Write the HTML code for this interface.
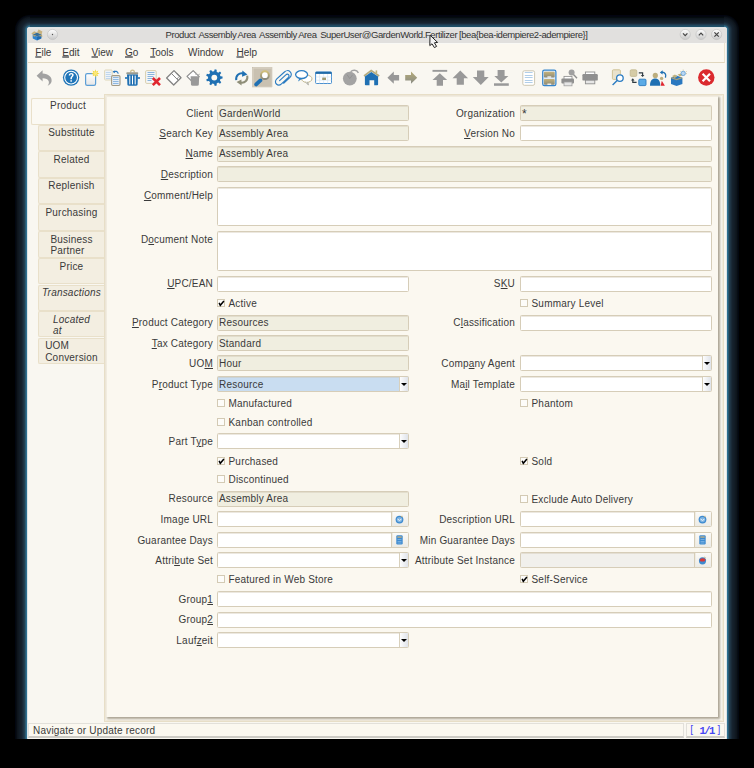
<!DOCTYPE html>
<html><head><meta charset="utf-8"><style>
*{box-sizing:border-box;margin:0;padding:0}
html,body{width:754px;height:768px;overflow:hidden;background:#000}
body{position:relative;font-family:"Liberation Sans", sans-serif;color:#3a3a3a}
#clip{position:absolute;left:0;top:0;width:754px;height:739px;overflow:hidden}
#win{position:absolute;left:27px;top:27px;width:700px;height:712px;background:#f9f7f1;border-radius:3px 3px 0 0;
 border-left:1px solid #dde3e6;border-right:1px solid #dfe4e6}
#title{position:absolute;left:27px;top:27px;width:700px;height:16px;background:linear-gradient(#dfe3e5 0,#dfe3e5 1px,#e6e5e3 1px,#e6e5e3 2px,#e1e0de 2px);border-radius:3px 3px 0 0}
#menu{position:absolute;left:28px;top:43px;width:697px;height:20px;background:linear-gradient(#f9f9f5 0,#f9f9f5 1px,#fbf8f0 1px);border-bottom:1px solid #e0d6bd;border-right:1px solid #ebe3cf}
.mi{position:absolute;top:47px;font-size:10px;color:#3a3a3a;white-space:nowrap}
.lb{position:absolute;font-size:10px;letter-spacing:0.2px;white-space:nowrap;line-height:12px;color:#3a3a3a}
.lt{position:absolute;font-size:10px;letter-spacing:0.2px;white-space:nowrap;line-height:12px;color:#3a3a3a}
.f{position:absolute;border:1px solid #d6cdb8;border-radius:1.5px;overflow:hidden;box-shadow:inset 0 1px 0 rgba(200,190,165,0.35)}
.ro{background:#f0eee0}
.w{background:#fff}
.sel{background:#c9ddf1}
.gray{background:#f1f0ec}
.ft{position:absolute;left:1px;top:1.5px;font-size:10px;letter-spacing:0.2px;line-height:12px;color:#3a3a3a;white-space:nowrap}
.cb{position:absolute;right:0;top:0;width:9.5px;height:100%;border-left:1px solid #d8d0bc;background:linear-gradient(90deg,#fdfdfd,#dfe3ea)}
.tri{position:absolute;left:1.5px;top:5.5px;width:0;height:0;border-left:3px solid transparent;border-right:3px solid transparent;border-top:3.5px solid #000}
.bb{position:absolute;right:0;top:0;width:17.5px;height:100%;border-left:1px solid #d6cdb8;box-shadow:inset 1px 0 0 #f0ece2;background:linear-gradient(#fbfaf7,#ecebe6);display:flex;align-items:center;justify-content:center}
.ck{position:absolute;width:8px;height:8px;border:1px solid #d3cab4;background:#fdfcf9}
.ck svg{position:absolute;left:-1px;top:-1px}
.tab{position:absolute;left:38px;width:66px;background:#f3eee1;border:1px solid #e9e0ca;border-right:none;border-radius:2px 0 0 2px;font-size:10px;letter-spacing:0.2px;line-height:11.5px;text-align:center;padding-top:1.5px;color:#3a3a3a}
.tab span{display:inline-block;text-align:left}
.tab.sel{left:31px;width:73px;padding-top:1px;background:#fbf9f3;z-index:3}
#panel{position:absolute;left:104px;top:94px;width:620px;height:628px;border:1px solid #e8dfc8;box-shadow:inset 0 0 0 1px #f2ecdd;background:#fbf8f0}
#inner{position:absolute;left:106px;top:96px;width:612px;height:621px;background:#fbf8f0;border-left:1px solid #f1ece0;border-top:1px solid #f1ece0;box-shadow:1px 1px 2px 0.5px rgba(120,110,90,0.6)}
#status{position:absolute;left:28px;top:723px;width:656px;height:15px;border-top:1px solid #e2e0da;border-left:1px solid #e2e0da;border-right:1px solid #e2e0da;border-bottom:2px solid #cdcbc5;background:#fbf8f0}
#rec{position:absolute;left:686px;top:723px;width:39px;height:15px;border-top:1px solid #e2e0da;border-left:1px solid #e2e0da;border-right:1px solid #e2e0da;border-bottom:2px solid #cdcbc5;background:#fbf8f0}
u{text-decoration:underline;text-underline-offset:1px}
.mi u{text-decoration-color:#808080;text-decoration-thickness:1.5px;text-underline-offset:0px}
.ic{position:absolute}
</style></head><body>
<div style="position:absolute;left:15px;top:30px;width:12px;height:709px;background:linear-gradient(90deg,rgb(2, 6, 16) 4.17%,rgb(7, 12, 18) 12.50%,rgb(13, 20, 28) 20.83%,rgb(16, 24, 32) 29.17%,rgb(18, 28, 38) 37.50%,rgb(20, 31, 42) 45.83%,rgb(22, 34, 46) 54.17%,rgb(26, 42, 56) 62.50%,rgb(31, 52, 68) 70.83%,rgb(35, 64, 80) 79.17%,rgb(42, 90, 116) 87.50%,rgb(46, 112, 144) 95.83%)"></div><div style="position:absolute;left:727px;top:30px;width:12px;height:709px;background:linear-gradient(270deg,rgb(2, 6, 16) 4.17%,rgb(7, 12, 18) 12.50%,rgb(13, 20, 28) 20.83%,rgb(16, 24, 32) 29.17%,rgb(18, 28, 38) 37.50%,rgb(20, 31, 42) 45.83%,rgb(22, 34, 46) 54.17%,rgb(26, 42, 56) 62.50%,rgb(31, 52, 68) 70.83%,rgb(35, 64, 80) 79.17%,rgb(42, 90, 116) 87.50%,rgb(46, 112, 144) 95.83%)"></div><div style="position:absolute;left:30px;top:15px;width:694px;height:12px;background:linear-gradient(180deg,rgb(2, 4, 16) 4.17%,rgb(3, 6, 15) 12.50%,rgb(4, 12, 14) 20.83%,rgb(12, 20, 28) 29.17%,rgb(14, 24, 32) 37.50%,rgb(16, 28, 38) 45.83%,rgb(20, 31, 42) 54.17%,rgb(22, 34, 46) 62.50%,rgb(26, 42, 58) 70.83%,rgb(30, 58, 78) 79.17%,rgb(32, 72, 96) 87.50%,rgb(30, 80, 104) 95.83%)"></div><div style="position:absolute;left:15px;top:15px;width:15px;height:15px;background:radial-gradient(circle at 100% 100%,rgba(46,112,144,1) 3px,rgb(46, 112, 144) 3.50px,rgb(42, 90, 116) 4.50px,rgb(35, 64, 80) 5.50px,rgb(31, 52, 68) 6.50px,rgb(26, 42, 56) 7.50px,rgb(22, 34, 46) 8.50px,rgb(20, 31, 42) 9.50px,rgb(18, 28, 38) 10.50px,rgb(16, 24, 32) 11.50px,rgb(13, 20, 28) 12.50px,rgb(7, 12, 18) 13.50px,rgb(2, 6, 16) 14.50px,rgba(0,0,0,0) 15.5px)"></div><div style="position:absolute;left:724px;top:15px;width:15px;height:15px;background:radial-gradient(circle at 0% 100%,rgba(46,112,144,1) 3px,rgb(46, 112, 144) 3.50px,rgb(42, 90, 116) 4.50px,rgb(35, 64, 80) 5.50px,rgb(31, 52, 68) 6.50px,rgb(26, 42, 56) 7.50px,rgb(22, 34, 46) 8.50px,rgb(20, 31, 42) 9.50px,rgb(18, 28, 38) 10.50px,rgb(16, 24, 32) 11.50px,rgb(13, 20, 28) 12.50px,rgb(7, 12, 18) 13.50px,rgb(2, 6, 16) 14.50px,rgba(0,0,0,0) 15.5px)"></div><div id="win"></div>
<div id="title"></div>
<div style="position:absolute;left:165.5px;top:29px;font-size:9.5px;line-height:11px;color:#333;white-space:pre;letter-spacing:-0.42px;word-spacing:-0.4px">Product  Assembly Area  Assembly Area  SuperUser@GardenWorld.Fertilizer [bea{bea-idempiere2-adempiere}]</div>
<div id="menu"></div>
<svg style="position:absolute;left:0;top:0;z-index:5" width="754" height="768" viewBox="0 0 754 768"><path d="M36.6 75.8 L42.6 70.2 L42.6 73.4 C48.5 73.6 52.2 77 51.6 81.2 C51.3 83.3 49.6 85 47.6 85.8 C49 84 49.2 82.3 48.6 81 C47.8 79.3 45.6 78.2 42.6 78.3 L42.6 81.6 Z" fill="#a2a2a2"/><circle cx="71.1" cy="77.6" r="8.2" fill="#1f75b8"/><circle cx="71.1" cy="77.6" r="6.4" fill="none" stroke="#fff" stroke-width="1.1"/><path d="M68.7 75.6 C68.7 73.8 69.8 72.9 71.2 72.9 C72.7 72.9 73.7 73.8 73.7 75.1 C73.7 76.6 71.9 76.9 71.9 78.6 L71.9 79.2 L70.4 79.2 L70.4 78.4 C70.4 76.4 72.1 76.1 72.1 75.2 C72.1 74.6 71.7 74.3 71.2 74.3 C70.6 74.3 70.3 74.8 70.3 75.6Z" fill="#fff"/><rect x="70.4" y="80.2" width="1.5" height="1.5" fill="#fff"/><defs><linearGradient id="gw" x1="0" y1="0" x2="0" y2="1"><stop offset="0" stop-color="#fff"/><stop offset="1" stop-color="#e6e6e6"/></linearGradient><linearGradient id="gol" x1="0" y1="0" x2="0" y2="1"><stop offset="0" stop-color="#c4b27a"/><stop offset="1" stop-color="#8c8a78"/></linearGradient><linearGradient id="gar" x1="0" y1="0" x2="0" y2="1"><stop offset="0" stop-color="#b5ab78"/><stop offset="1" stop-color="#8a8c86"/></linearGradient><linearGradient id="gbtn" x1="0" y1="0" x2="0" y2="1"><stop offset="0" stop-color="#fefefe"/><stop offset="1" stop-color="#c8c8c8"/></linearGradient></defs><rect x="85.6" y="73.6" width="10" height="11.8" rx="1.6" fill="url(#gw)" stroke="#5d9fd6" stroke-width="1.2"/><path d="M95.40 69.20 L96.13 71.64 L98.37 70.43 L97.16 72.67 L99.60 73.40 L97.16 74.13 L98.37 76.37 L96.13 75.16 L95.40 77.60 L94.67 75.16 L92.43 76.37 L93.64 74.13 L91.20 73.40 L93.64 72.67 L92.43 70.43 L94.67 71.64Z" fill="#f4d428"/><circle cx="95.4" cy="73.4" r="1.8" fill="#fbe878"/><rect x="104.6" y="70" width="7.6" height="10" rx="1" fill="#eef3f8" stroke="#dcd2b2" stroke-width="0.9"/><path d="M105.8 72.5h5M105.8 74.5h5M105.8 76.5h5M105.8 78.5h5" stroke="#b9d2ea" stroke-width="0.9"/><rect x="111.6" y="75.6" width="8.4" height="9.9" rx="1.2" fill="#e4eef8" stroke="#a39a84" stroke-width="1.1"/><path d="M113 77.5h5.6M113 79.5h5.6M113 81.5h5.6M113 83.5h5.6" stroke="#8fb8e0" stroke-width="1"/><path d="M113.5 72.2 C115.5 70.6 117.5 71.2 118.3 73.6" stroke="#2a78c0" stroke-width="1.2" fill="none"/><path d="M112.6 71.2 L115.2 70.4 L114.6 73.3Z" fill="#2a78c0"/><path d="M130.6 72.4 C130.6 69.4 134.4 69.4 134.4 72.4" stroke="#cdbf8e" stroke-width="1.2" fill="none"/><rect x="126.3" y="72.2" width="11.9" height="2.2" rx="0.8" fill="#9a9a8e"/><path d="M127 74.4 H138 L137.6 84.6 C137.5 85.4 137 85.8 136.2 85.8 H128.8 C128 85.8 127.5 85.4 127.4 84.6Z" fill="#1f70b3"/><rect x="125" y="77.2" width="2.5" height="1.6" fill="#1f70b3"/><rect x="137.5" y="77.2" width="2.5" height="1.6" fill="#1f70b3"/><path d="M129.8 75.6V84.4M132.5 75.6V84.4M135.2 75.6V84.4" stroke="#fff" stroke-width="1"/><rect x="145.6" y="70.6" width="10.6" height="12.8" rx="1.2" fill="#f4f6f8" stroke="#d8cfae" stroke-width="1"/><path d="M147.5 72.5h7M147.5 74.5h7M147.5 76.5h6M147.5 78.5h5M147.5 80.5h4" stroke="#7eaed8" stroke-width="0.9"/><path d="M152.8 78 L160 85.2 M160 78 L152.8 85.2" stroke="#e0262f" stroke-width="2.6"/><path d="M174 70.6 L181 77.7 L173.7 85 L166.6 78Z" fill="#fff" stroke="#838383" stroke-width="1.3" stroke-linejoin="round"/><path d="M171.3 73.3 L178.3 80.4 M176.3 72.9 L180 76.6 M177 78.8 L178.6 77.3" stroke="#838383" stroke-width="1" fill="none"/><path d="M193.2 70.6 L199.2 76.6 L193.2 82.6 L187 76.4Z" fill="#fff" stroke="#8c8c8c" stroke-width="1.2" stroke-linejoin="round"/><path d="M190.6 76.2 H199.2 L198.8 84.6 C198.7 85.4 198.2 85.8 197.4 85.8 H192.4 C191.6 85.8 191.1 85.4 191 84.6Z" fill="#999"/><path d="M195 74.5 L197 73 M197.5 75 L200 74" stroke="#b0b0b0" stroke-width="0.8"/><path d="M220.46 76.29 L222.54 76.62 L222.54 78.58 L220.46 78.91 L219.86 80.56 L221.25 82.14 L219.98 83.65 L218.18 82.56 L216.66 83.44 L216.70 85.55 L214.76 85.89 L214.08 83.90 L212.35 83.59 L211.03 85.23 L209.33 84.25 L210.08 82.28 L208.96 80.94 L206.89 81.34 L206.22 79.50 L208.06 78.48 L208.06 76.72 L206.22 75.70 L206.89 73.86 L208.96 74.26 L210.08 72.92 L209.33 70.95 L211.03 69.97 L212.35 71.61 L214.08 71.30 L214.76 69.31 L216.70 69.65 L216.66 71.76 L218.18 72.64 L219.98 71.55 L221.25 73.06 L219.86 74.64Z" fill="#1f70b3"/><circle cx="214.3" cy="77.6" r="2.9" fill="#fbf8f0"/><path d="M236.2 80.2 C235.6 75.6 239 72.6 243.2 73.4" stroke="#1f70b3" stroke-width="2" fill="none"/><path d="M242.4 70.4 L247.4 74.6 L242 76.8Z" fill="#1f70b3"/><path d="M247.2 75.6 C248.2 80 245 83.4 240.6 82.6" stroke="#8f8e78" stroke-width="2" fill="none"/><path d="M241.4 79.4 L236.6 82 L241.6 85.6Z" fill="#8f8e78"/><defs><linearGradient id="glens" x1="0" y1="0" x2="0" y2="1"><stop offset="0" stop-color="#d2c079"/><stop offset="1" stop-color="#86877c"/></linearGradient></defs><rect x="252" y="67" width="20" height="20" fill="#c9c1b1"/><path d="M253 86.5V68H271.5" stroke="#ddd6c8" stroke-width="1" fill="none"/><path d="M252 87H272V67" stroke="#d8d2c4" stroke-width="0.8" fill="none"/><path d="M256.2 84.4 L260.4 80.4" stroke="#1f70b3" stroke-width="3.8" stroke-linecap="round"/><circle cx="264.9" cy="75.2" r="3.9" fill="#fff" stroke="url(#glens)" stroke-width="2"/><path d="M283.6 83.2 L289.8 77.6 C291.6 76 291.8 73.4 290.2 71.8 C288.6 70.2 286 70.4 284.4 72 L276.8 78.8 C275.2 80.3 275 82.6 276.4 84 C277.8 85.4 280 85.2 281.5 83.8 L288.4 77.4 C289.2 76.6 289.2 75.4 288.5 74.7 C287.8 74 286.6 74.1 285.8 74.9 L279.6 80.6" stroke="#2b7cc2" stroke-width="1.15" fill="none" stroke-linecap="round"/><ellipse cx="306.8" cy="78.8" rx="5.2" ry="3.6" fill="#fff" stroke="#c2b78c" stroke-width="1"/><path d="M305.6 82.2 L308.4 84.8 L307.6 82" stroke="#a5a59a" stroke-width="1" fill="#fff"/><ellipse cx="301.6" cy="74.6" rx="6" ry="3.9" fill="#fff" stroke="#2e7fc4" stroke-width="1.3"/><path d="M299.4 78.2 L298 81.6 L302.4 78.4" fill="#2e7fc4"/><rect x="315.6" y="71.9" width="15.9" height="11.6" rx="0.8" fill="#fff" stroke="#4a90d0" stroke-width="1"/><rect x="315.6" y="71.9" width="15.9" height="2" fill="#1f6aa8"/><path d="M319.6 74v9.4M323.6 74v9.4M327.6 74v9.4M315.8 77h15.6M315.8 80.2h15.6" stroke="#d9e6f2" stroke-width="0.7"/><rect x="322.2" y="77.6" width="3.8" height="2.4" fill="#9f9b72"/><circle cx="349.8" cy="78.6" r="6.9" fill="#a3a3a3"/><path d="M347 74.6 L349.8 78.6 L352.6 74.8" stroke="#8e8e8e" stroke-width="0.8" fill="none"/><path d="M350.6 71.8 C352.6 69.8 356.6 69.6 358.4 72.8" stroke="#a3a3a3" stroke-width="1.5" fill="none"/><path d="M364 76 L371.2 70.6 L379.2 76" stroke="#b4ab7e" stroke-width="1.6" fill="none"/><rect x="375.6" y="70.4" width="1.6" height="3" fill="#c0b27a"/><path d="M364.9 76.6 L371.3 72 L378.1 76.6 V84.6 C378.1 85.1 377.8 85.3 377.3 85.3 H374.2 V80.2 H369.5 V85.3 H365.7 C365.2 85.3 364.9 85 364.9 84.6Z" fill="#1f70b3"/><path d="M387.4 77.7 L393.8 71.6 V75 H399.1 V80.6 H393.8 V83.8Z" fill="#989898"/><path d="M417.2 77.7 L411 71.6 V75 H405.2 V80.6 H411 V83.8Z" fill="url(#gar)"/><rect x="432.5" y="69.9" width="14.7" height="1.9" fill="#999"/><path d="M439.8 73.2 L447.2 79.9 H443 V85.8 H436.7 V79.9 H432.5Z" fill="#999"/><path d="M460.3 70.5 L468.1 78.3 H463.9 V84.7 H456.7 V78.3 H452.5Z" fill="#999"/><path d="M480.8 84.9 L488.7 76.9 H484.3 V70.5 H477 V76.9 H472.8Z" fill="#999"/><rect x="494" y="83.3" width="14.8" height="2.5" fill="#999"/><path d="M501.3 82.5 L508.4 76 H504.6 V69.9 H497.6 V76 H494.3Z" fill="#999"/><rect x="522.8" y="70.8" width="11.8" height="14.5" rx="1.6" fill="#fff" stroke="#cdc7b2" stroke-width="1"/><path d="M524.8 72.5h7.8M524.8 75.5h7.8M524.8 77.5h7.8M524.8 80.5h7.8M524.8 82.5h7.8" stroke="#a8c8e6" stroke-width="0.9"/><rect x="542.7" y="70.2" width="13.2" height="15.4" rx="1.6" fill="#dfeaf5" stroke="#3585cc" stroke-width="1.2"/><rect x="543.9" y="71.8" width="10.8" height="5.8" rx="1" fill="url(#gol)"/><rect x="543.9" y="79" width="10.8" height="5.8" rx="1" fill="url(#gol)"/><rect x="547.4" y="76.4" width="3.8" height="1.2" fill="#fff"/><rect x="547.4" y="83.6" width="3.8" height="1.2" fill="#fff"/><rect x="564" y="76.4" width="8" height="3" fill="#fff" stroke="#949494" stroke-width="0.9"/><rect x="561.4" y="78.6" width="12.6" height="5" rx="1" fill="#8f8f8f"/><rect x="564" y="82" width="8" height="3.8" fill="#e6e6e6" stroke="#a0a0a0" stroke-width="0.8"/><path d="M573 74 L577 78.2" stroke="#8f8f8f" stroke-width="1.4"/><circle cx="571.6" cy="72.6" r="3" fill="#a0a0a0"/><rect x="585.4" y="72" width="9.4" height="2.6" fill="#fff" stroke="#8f8f8f" stroke-width="0.9"/><rect x="582.4" y="74" width="15.4" height="6.6" rx="1.2" fill="#8f8f8f"/><rect x="585.4" y="80.2" width="9.4" height="3.6" fill="#e6e6e6" stroke="#8f8f8f" stroke-width="0.9"/><rect x="612.4" y="69.8" width="8" height="9.6" rx="1" fill="#e9e2cc" stroke="#cdbf90" stroke-width="0.9"/><path d="M612.6 85 L617.4 80.2" stroke="#2b7cc2" stroke-width="1.4"/><circle cx="619.9" cy="78.1" r="3.3" fill="#fff" stroke="#2b7cc2" stroke-width="1.3"/><rect x="630.2" y="69.8" width="6.6" height="6.6" rx="1.2" fill="#d6cca6" stroke="#c2b78e" stroke-width="0.8"/><rect x="638.8" y="79.2" width="7.2" height="6.4" rx="1" fill="#5aaae6" stroke="#2a7ac0" stroke-width="0.9"/><path d="M638.8 72.8 H642.6 V75.4" stroke="#2f3b42" stroke-width="1.2" fill="none"/><path d="M640.8 75 L644.4 75 L642.6 77Z" fill="#2f3b42"/><path d="M636.6 82.4 H632.8 V80" stroke="#2f3b42" stroke-width="1.2" fill="none"/><path d="M631 80.4 L634.6 80.4 L632.8 78.3Z" fill="#2f3b42"/><circle cx="655.3" cy="75.4" r="2.6" fill="#bcae7e"/><path d="M650 85.8 C650 81 652 78.6 655.2 78.6 C658.4 78.6 660.3 81 660.3 85.8Z" fill="#1f70b3"/><circle cx="661.6" cy="78.4" r="1.7" fill="#bcae7e"/><path d="M660.7 85.8 L661.8 80.8 L664.9 85.8Z" fill="#e0262f"/><path d="M661.6 72.4 C664.6 71.8 666.8 74.4 665.4 77.6" stroke="#1f70b3" stroke-width="1.4" fill="none"/><path d="M659.8 72.4 L662.6 70.2 L662.6 74.6Z" fill="#1f70b3"/><path d="M671 77.8 L676.6 75.4 L682.4 77.8 V84 L676.6 86 L671 84Z" fill="#2a78c0"/><path d="M671.4 77.6 L676.6 79.6 L682.2 77.6" stroke="#a8a07a" stroke-width="1.4" fill="none"/><path d="M672 76 L675 74.6 L677.4 76.4 L674.6 78Z M677.6 74.6 L680.8 73.4 L682.6 75.2 L679.8 76.6Z" fill="#c2b27c"/><circle cx="683.2" cy="73.4" r="2.2" fill="#b8d6f0" stroke="#4a90d0" stroke-width="0.7"/><path d="M683.2 69.6v1M686.4 71v0.8M687 73.6h-1M680 71l0.7 0.6" stroke="#c8c090" stroke-width="0.8"/><circle cx="706.3" cy="77.5" r="8.2" fill="#db2a2f"/><path d="M702.6 73.8 L710 81.2 M710 73.8 L702.6 81.2" stroke="#fff" stroke-width="2.2"/><path d="M32.6 34.6 L37 36.6 L37 40.4 L32.8 38.4Z" fill="#2f84d0"/><path d="M37 36.6 L41.6 34.6 L41.4 38.4 L37 40.4Z" fill="#1f6cb4"/><path d="M32.6 34.6 L37 32.6 L41.6 34.6 L37 36.6Z" fill="#3a6f96"/><path d="M31.4 33.6 L34.2 31.2 L37 32.6 L32.6 34.6Z" fill="#c8b27e"/><path d="M37 32.6 L38.6 29.4 L42.4 31.4 L41.6 34.6Z" fill="#c8b27e"/><path d="M32.6 34.6 L34 36.8 L36.6 35.8Z M41.6 34.6 L42.6 36.4 L38.2 36.2Z" fill="#b8a470"/><circle cx="52.5" cy="34.5" r="5.1" fill="url(#gbtn)" stroke="#bdbdbd" stroke-width="0.6"/><circle cx="52.5" cy="34.5" r="0.7" fill="#555"/><circle cx="685.2" cy="34.5" r="5.1" fill="url(#gbtn)" stroke="#bdbdbd" stroke-width="0.6"/><path d="M683.0 33.4 L685.2 35.6 L687.4000000000001 33.4" stroke="#444" stroke-width="1.2" fill="none"/><circle cx="701" cy="34.5" r="5.1" fill="url(#gbtn)" stroke="#bdbdbd" stroke-width="0.6"/><path d="M698.8 35.4 L701 33.2 L703.2 35.4" stroke="#444" stroke-width="1.2" fill="none"/><circle cx="716.6" cy="34.5" r="5.1" fill="url(#gbtn)" stroke="#bdbdbd" stroke-width="0.6"/><path d="M714.4 32.3 L718.8000000000001 36.7 M718.8000000000001 32.3 L714.4 36.7" stroke="#444" stroke-width="1.2"/><path d="M430 35.2 L429.8 45.6 L432 43.8 L434.4 47.6 L436.6 46.4 L434.4 42.8 L437.6 42.4Z" fill="#f4f4f4" stroke="#222" stroke-width="1" stroke-linejoin="round"/></svg>
<div class="mi" style="left:35.3px"><u>F</u>ile</div>
<div class="mi" style="left:62.3px"><u>E</u>dit</div>
<div class="mi" style="left:91.5px"><u>V</u>iew</div>
<div class="mi" style="left:125px"><u>G</u>o</div>
<div class="mi" style="left:150.2px"><u>T</u>ools</div>
<div class="mi" style="left:188px">Window</div>
<div class="mi" style="left:236.5px"><u>H</u>elp</div>
<div id="panel"></div>
<div class="tab sel" style="top:98px;height:26.5px;"><span>Product</span></div>
<div class="tab" style="top:124.5px;height:26.5px;"><span>Substitute</span></div>
<div class="tab" style="top:151px;height:26.5px;"><span>Related</span></div>
<div class="tab" style="top:177.5px;height:26.5px;"><span>Replenish</span></div>
<div class="tab" style="top:204px;height:27px;"><span>Purchasing</span></div>
<div class="tab" style="top:231px;height:26.5px;"><span>Business<br>Partner</span></div>
<div class="tab" style="top:258px;height:26px;"><span>Price</span></div>
<div class="tab" style="top:284.5px;height:26.0px;font-style:italic;"><span>Transactions</span></div>
<div class="tab" style="top:311px;height:26px;font-style:italic;"><span>Located<br>at</span></div>
<div class="tab" style="top:337.5px;height:26.5px;"><span>UOM<br>Conversion</span></div>
<div id="inner"></div>
<div class="lb" style="right:541px;top:108px">Client</div>
<div class="f ro" style="left:217px;top:105px;width:192px;height:16px">
<span class="ft" style="top:2px">GardenWorld</span>
</div>
<div class="lb" style="right:239px;top:108px">Organization</div>
<div class="f ro" style="left:520px;top:105px;width:192px;height:16px">
<span class="ft" style="top:2px"><span style="font-size:12px">*</span></span>
</div>
<div class="lb" style="right:541px;top:128px"><u>S</u>earch Key</div>
<div class="f ro" style="left:217px;top:125px;width:192px;height:16px">
<span class="ft" style="top:2px">Assembly Area</span>
</div>
<div class="lb" style="right:239px;top:128px"><u>V</u>ersion No</div>
<div class="f w" style="left:520px;top:125px;width:192px;height:16px">
</div>
<div class="lb" style="right:541px;top:148px"><u>N</u>ame</div>
<div class="f ro" style="left:217px;top:146px;width:495px;height:16px">
<span class="ft" style="top:1px">Assembly Area</span>
</div>
<div class="lb" style="right:541px;top:169px"><u>D</u>escription</div>
<div class="f ro" style="left:217px;top:166px;width:495px;height:16px">
</div>
<div class="lb" style="right:541px;top:190px"><u>C</u>omment/Help</div>
<div class="f w" style="left:217px;top:187px;width:495px;height:39px">
</div>
<div class="lb" style="right:541px;top:234px">D<u>o</u>cument Note</div>
<div class="f w" style="left:217px;top:231px;width:495px;height:40px">
</div>
<div class="lb" style="right:541px;top:278px"><u>U</u>PC/EAN</div>
<div class="f w" style="left:217px;top:276px;width:192px;height:16px">
</div>
<div class="lb" style="right:239px;top:278px">S<u>K</u>U</div>
<div class="f w" style="left:520px;top:276px;width:192px;height:16px">
</div>
<div class="ck" style="left:217px;top:299px"><svg width="8" height="8" viewBox="0 0 8 8"><path d="M2.1 3.9 L3.3 6.3 L6.9 2.1" stroke="#000" stroke-width="1.5" fill="none"/></svg></div>
<div class="lt" style="left:228.5px;top:298px">Active</div>
<div class="ck" style="left:520px;top:299px"></div>
<div class="lt" style="left:531.5px;top:298px">Summary Level</div>
<div class="lb" style="right:541px;top:317px"><u>P</u>roduct Category</div>
<div class="f ro" style="left:217px;top:315px;width:192px;height:16px">
<span class="ft" style="top:1px">Resources</span>
</div>
<div class="lb" style="right:239px;top:317px">C<u>l</u>assification</div>
<div class="f w" style="left:520px;top:315px;width:192px;height:16px">
</div>
<div class="lb" style="right:541px;top:338px"><u>T</u>ax Category</div>
<div class="f ro" style="left:217px;top:335px;width:192px;height:16px">
<span class="ft" style="top:2px">Standard</span>
</div>
<div class="lb" style="right:541px;top:358px">UO<u>M</u></div>
<div class="f ro" style="left:217px;top:355px;width:192px;height:16px">
<span class="ft" style="top:2px">Hour</span>
</div>
<div class="lb" style="right:239px;top:358px">Comp<u>a</u>ny Agent</div>
<div class="f w" style="left:520px;top:355px;width:192px;height:16px">
<div class="cb"><i class="tri"></i></div>
</div>
<div class="lb" style="right:541px;top:379px">P<u>r</u>oduct Type</div>
<div class="f sel" style="left:217px;top:376px;width:192px;height:16px">
<span class="ft" style="top:2px">Resource</span>
<div class="cb"><i class="tri"></i></div>
</div>
<div class="lb" style="right:239px;top:379px">Ma<u>i</u>l Template</div>
<div class="f w" style="left:520px;top:376px;width:192px;height:16px">
<div class="cb"><i class="tri"></i></div>
</div>
<div class="ck" style="left:217px;top:399px"></div>
<div class="lt" style="left:228.5px;top:398px">Manufactured</div>
<div class="ck" style="left:520px;top:399px"></div>
<div class="lt" style="left:531.5px;top:398px">Phantom</div>
<div class="ck" style="left:217px;top:418px"></div>
<div class="lt" style="left:228.5px;top:417px">Kanban controlled</div>
<div class="lb" style="right:541px;top:436px">Part T<u>y</u>pe</div>
<div class="f w" style="left:217px;top:433px;width:192px;height:16px">
<div class="cb"><i class="tri"></i></div>
</div>
<div class="ck" style="left:217px;top:457px"><svg width="8" height="8" viewBox="0 0 8 8"><path d="M2.1 3.9 L3.3 6.3 L6.9 2.1" stroke="#000" stroke-width="1.5" fill="none"/></svg></div>
<div class="lt" style="left:228.5px;top:456px">Purchased</div>
<div class="ck" style="left:520px;top:457px"><svg width="8" height="8" viewBox="0 0 8 8"><path d="M2.1 3.9 L3.3 6.3 L6.9 2.1" stroke="#000" stroke-width="1.5" fill="none"/></svg></div>
<div class="lt" style="left:531.5px;top:456px">Sold</div>
<div class="ck" style="left:217px;top:475px"></div>
<div class="lt" style="left:228.5px;top:474px">Discontinued</div>
<div class="lb" style="right:541px;top:493px">Resource</div>
<div class="f ro" style="left:217px;top:491px;width:192px;height:16px">
<span class="ft" style="top:1px">Assembly Area</span>
</div>
<div class="ck" style="left:520px;top:495px"></div>
<div class="lt" style="left:531.5px;top:494px">Exclude Auto Delivery</div>
<div class="lb" style="right:541px;top:514px">Image URL</div>
<div class="f w" style="left:217px;top:511px;width:192px;height:16px">
<div class="bb"><svg width="9" height="9" viewBox="0 0 9 9"><circle cx="4.5" cy="4.6" r="3.9" fill="#3d8ad0"/><circle cx="4.5" cy="4.6" r="2.7" fill="#7fb4e2"/><path d="M2.6 4.2 Q4.5 6.6 6.4 4.2" stroke="#fff" stroke-width="0.9" fill="none"/><path d="M5.6 1 L7.6 0.8 L7 2.6Z" fill="#c8b27e"/></svg></div>
</div>
<div class="lb" style="right:239px;top:514px">Description URL</div>
<div class="f w" style="left:520px;top:511px;width:192px;height:16px">
<div class="bb"><svg width="9" height="9" viewBox="0 0 9 9"><circle cx="4.5" cy="4.6" r="3.9" fill="#3d8ad0"/><circle cx="4.5" cy="4.6" r="2.7" fill="#7fb4e2"/><path d="M2.6 4.2 Q4.5 6.6 6.4 4.2" stroke="#fff" stroke-width="0.9" fill="none"/><path d="M5.6 1 L7.6 0.8 L7 2.6Z" fill="#c8b27e"/></svg></div>
</div>
<div class="lb" style="right:541px;top:535px">Guarantee Days</div>
<div class="f w" style="left:217px;top:532px;width:192px;height:16px">
<div class="bb"><svg width="7" height="10" viewBox="0 0 7 10"><rect x="0.3" y="0.3" width="6.4" height="9.2" rx="1.2" fill="#3d8ad0"/><rect x="1.3" y="1.4" width="4.4" height="1.3" fill="#c8b27e"/><path d="M1.5 4.5h4M1.5 6.5h4M1.5 8h4" stroke="#8cbce6" stroke-width="0.7"/></svg></div>
</div>
<div class="lb" style="right:239px;top:535px">Min Guarantee Days</div>
<div class="f w" style="left:520px;top:532px;width:192px;height:16px">
<div class="bb"><svg width="7" height="10" viewBox="0 0 7 10"><rect x="0.3" y="0.3" width="6.4" height="9.2" rx="1.2" fill="#3d8ad0"/><rect x="1.3" y="1.4" width="4.4" height="1.3" fill="#c8b27e"/><path d="M1.5 4.5h4M1.5 6.5h4M1.5 8h4" stroke="#8cbce6" stroke-width="0.7"/></svg></div>
</div>
<div class="lb" style="right:541px;top:555px">Attri<u>b</u>ute Set</div>
<div class="f w" style="left:217px;top:552px;width:192px;height:16px">
<div class="cb"><i class="tri"></i></div>
</div>
<div class="lb" style="right:239px;top:555px">Attribute Set Instance</div>
<div class="f gray" style="left:520px;top:552px;width:192px;height:16px">
<div class="bb"><svg width="9" height="9" viewBox="0 0 9 9"><circle cx="4.5" cy="4.8" r="3.6" fill="#3d8ad0"/><path d="M1.6 3.6 Q4.5 1.2 7.6 3.4 L6.8 5.2 Q4.5 6 2.2 5.2Z" fill="#d83838"/><path d="M6 1 L7.8 1.8" stroke="#c8b27e" stroke-width="0.8"/></svg></div>
</div>
<div class="ck" style="left:217px;top:575px"></div>
<div class="lt" style="left:228.5px;top:574px">Featured in Web Store</div>
<div class="ck" style="left:520px;top:575px"><svg width="8" height="8" viewBox="0 0 8 8"><path d="M2.1 3.9 L3.3 6.3 L6.9 2.1" stroke="#000" stroke-width="1.5" fill="none"/></svg></div>
<div class="lt" style="left:531.5px;top:574px">Self-Service</div>
<div class="lb" style="right:541px;top:594px">Group<u>1</u></div>
<div class="f w" style="left:217px;top:591px;width:495px;height:16px">
</div>
<div class="lb" style="right:541px;top:614px">Group<u>2</u></div>
<div class="f w" style="left:217px;top:612px;width:495px;height:16px">
</div>
<div class="lb" style="right:541px;top:635px">Lauf<u>z</u>eit</div>
<div class="f w" style="left:217px;top:632px;width:192px;height:16px">
<div class="cb"><i class="tri"></i></div>
</div>
<div id="status"></div>
<div id="rec"></div>
<div style="position:absolute;left:33px;top:725px;font-size:10px;letter-spacing:0.2px;line-height:12px;color:#3a3a3a;white-space:nowrap">Navigate or Update record</div>
<div style="position:absolute;left:690.2px;top:724px;font-family:'Liberation Sans',sans-serif;font-size:10px;line-height:12px;color:#4646f4;white-space:pre">[</div><div style="position:absolute;left:699.6px;top:725px;font-family:'Liberation Mono',monospace;font-weight:bold;font-size:10.5px;line-height:12px;color:#4646f4;letter-spacing:-1.6px;white-space:pre">1/1</div><div style="position:absolute;left:717.6px;top:724px;font-family:'Liberation Sans',sans-serif;font-size:10px;line-height:12px;color:#4646f4;white-space:pre">]</div>
</body></html>
